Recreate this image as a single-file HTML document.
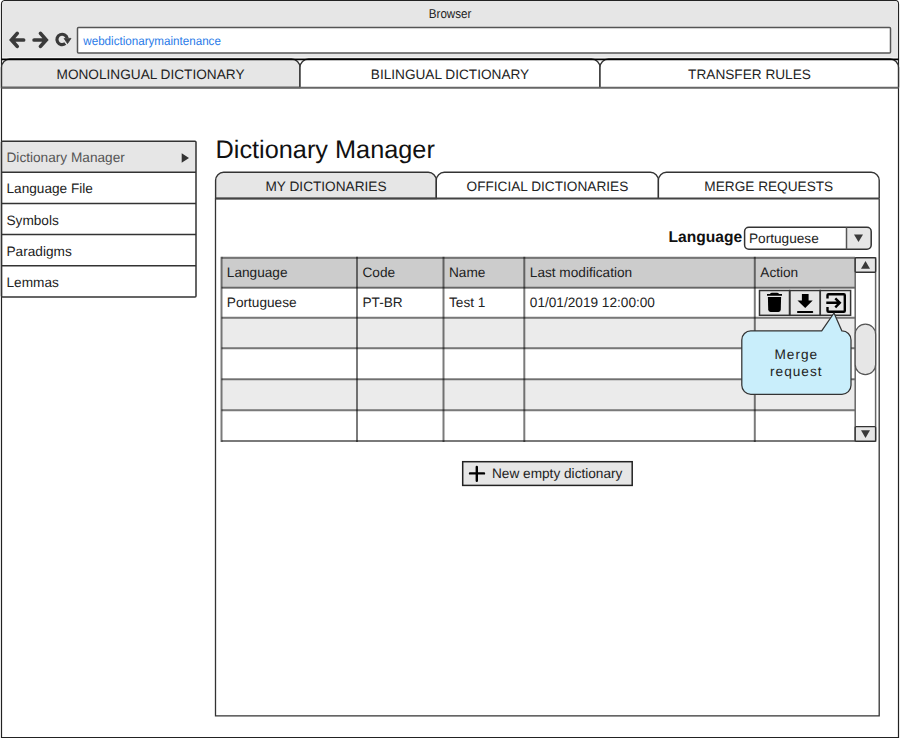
<!DOCTYPE html>
<html><head><meta charset="utf-8">
<style>
html,body{margin:0;padding:0;background:#fff;width:900px;height:738px;overflow:hidden}
svg{display:block}
text{font-family:"Liberation Sans",sans-serif;font-size:13.65px;fill:#222;text-rendering:geometricPrecision}
</style></head>
<body>
<svg width="900" height="738" viewBox="0 0 900 738">
  <!-- browser frame -->
  <path d="M1.5,738 V4 A3.5,3.5 0 0 1 5,0.5 H895 A3.5,3.5 0 0 1 898.5,4 V738" fill="#fff" stroke="#222" stroke-width="1.2"/>
  <path d="M2.1,57.6 V4 A2.9,2.9 0 0 1 5,1.1 H895 A2.9,2.9 0 0 1 897.9,4 V57.6 Z" fill="#e6e6e6"/>
  <line x1="1.5" y1="737.5" x2="898.5" y2="737.5" stroke="#222" stroke-width="1.2"/>
  <text x="428.8" y="17.6" textLength="42.6" lengthAdjust="spacingAndGlyphs" style="font-size:12.9px">Browser</text>
  <!-- nav icons -->
  <g fill="none" stroke="#3a3a3a" stroke-width="3.7" stroke-linecap="round" stroke-linejoin="miter">
    <path d="M23.6,40 H12.5 M17.2,33.4 L11.5,39.9 L17.2,46.4"/>
    <path d="M34.1,40 H45.2 M40.5,33.4 L46.2,39.9 L40.5,46.4"/>
  </g>
  <path d="M65.3,43.6 A5.2,5.2 0 1 1 67.2,38.3" fill="none" stroke="#3a3a3a" stroke-width="3.2"/>
  <path d="M64.1,38.4 L71,38.4 L67.5,43.6 Z" fill="#3a3a3a" stroke="#3a3a3a" stroke-width="0.8" stroke-linejoin="round"/>
  <!-- url box -->
  <rect x="77.5" y="27.5" width="813" height="25.5" rx="1" fill="#fff" stroke="#555" stroke-width="1.5"/>
  <text x="83.3" y="44.6" textLength="137.6" lengthAdjust="spacingAndGlyphs" style="font-size:12.3px;fill:#2a7be8">webdictionarymaintenance</text>
  <!-- top tabs -->
  <path d="M1.5,87.5 V67.5 A8.5,8.5 0 0 1 10.0,59 H291.5 A8.5,8.5 0 0 1 300,67.5 V87.5 Z" fill="#e6e6e6" stroke="#333" stroke-width="1.4"/>
  <path d="M300,87.5 V67.5 A8.5,8.5 0 0 1 308.5,59 H591.5 A8.5,8.5 0 0 1 600,67.5 V87.5" fill="#fff" stroke="#333" stroke-width="1.4"/>
  <path d="M600,87.5 V67.5 A8.5,8.5 0 0 1 608.5,59 H890.0 A8.5,8.5 0 0 1 898.5,67.5 V87.5" fill="#fff" stroke="#333" stroke-width="1.4"/>
  <line x1="1.5" y1="59.3" x2="898.5" y2="59.3" stroke="#000" stroke-width="1.7"/>
  <line x1="1.5" y1="87.7" x2="898.5" y2="87.7" stroke="#666" stroke-width="2"/>
  <text x="150.5" y="78.9" text-anchor="middle">MONOLINGUAL DICTIONARY</text>
  <text x="450" y="78.9" text-anchor="middle">BILINGUAL DICTIONARY</text>
  <text x="749.5" y="78.9" text-anchor="middle">TRANSFER RULES</text>

  <!-- sidebar -->
  <rect x="1.5" y="141.3" width="194.5" height="31" fill="#e6e6e6"/>
  <rect x="1.5" y="141.3" width="194.5" height="155.7" rx="1" fill="none" stroke="#333" stroke-width="1.5"/>
  <g stroke="#333" stroke-width="1.5">
    <line x1="1.5" y1="172.3" x2="196" y2="172.3"/>
    <line x1="1.5" y1="203.4" x2="196" y2="203.4"/>
    <line x1="1.5" y1="234.5" x2="196" y2="234.5"/>
    <line x1="1.5" y1="265.7" x2="196" y2="265.7"/>
  </g>
  <text x="6.5" y="162" style="fill:#555">Dictionary Manager</text>
  <path d="M181.7,153.2 L189,158 L181.7,162.7 Z" fill="#333"/>
  <text x="6.5" y="193.4">Language File</text>
  <text x="6.5" y="224.5">Symbols</text>
  <text x="6.5" y="255.7">Paradigms</text>
  <text x="6.5" y="286.8">Lemmas</text>

  <!-- title -->
  <text x="215.5" y="157.6" style="font-size:25.3px;fill:#111">Dictionary Manager</text>

  <!-- inner panel -->
  <path d="M215.5,198.5 V715.8 H879.2 V198.5" fill="#fff" stroke="#333" stroke-width="1.3"/>
  <path d="M215.6,198.5 V180.3 A8,8 0 0 1 223.6,172.3 H428.3 A8,8 0 0 1 436.3,180.3 V198.5 Z" fill="#e6e6e6" stroke="#333" stroke-width="1.4"/>
  <path d="M436.3,198.5 V180.3 A8,8 0 0 1 444.3,172.3 H650.4 A8,8 0 0 1 658.4,180.3 V198.5" fill="#fff" stroke="#333" stroke-width="1.4"/>
  <path d="M658.4,198.5 V180.3 A8,8 0 0 1 666.4,172.3 H871.2 A8,8 0 0 1 879.2,180.3 V198.5" fill="#fff" stroke="#333" stroke-width="1.4"/>
  <line x1="215.6" y1="198.5" x2="879.2" y2="198.5" stroke="#444" stroke-width="2"/>
  <text x="326" y="191.3" text-anchor="middle">MY DICTIONARIES</text>
  <text x="547.4" y="191.3" text-anchor="middle">OFFICIAL DICTIONARIES</text>
  <text x="768.8" y="191.3" text-anchor="middle">MERGE REQUESTS</text>

  <!-- language dropdown -->
  <text x="668.5" y="241.7" style="font-size:15.6px;font-weight:bold;fill:#111">Language</text>
  <path d="M846.5,227.3 H867 Q871.2,227.3 871.2,231.5 V245 Q871.2,249.3 867,249.3 H846.5 Z" fill="#e6e6e6"/>
  <rect x="744.6" y="227.3" width="126.6" height="22" rx="4.2" fill="none" stroke="#333" stroke-width="1.5"/>
  <line x1="846.5" y1="227.3" x2="846.5" y2="249.3" stroke="#555" stroke-width="1.5"/>
  <path d="M854,234.5 L863,234.5 L858.5,242 Z" fill="#3a3a3a"/>
  <text x="749" y="243.3">Portuguese</text>

  <!-- table -->
  <rect x="221.5" y="257.8" width="633.5" height="30" fill="#cccccc"/>
  <rect x="221.5" y="317.8" width="633.5" height="30.5" fill="#ebebeb"/>
  <rect x="221.5" y="379" width="633.5" height="31" fill="#ebebeb"/>
  <g stroke="#000" stroke-opacity="0.52" stroke-width="2">
    <line x1="221.5" y1="257.8" x2="855" y2="257.8"/>
    <line x1="221.5" y1="287.8" x2="855" y2="287.8"/>
    <line x1="221.5" y1="317.8" x2="855" y2="317.8"/>
    <line x1="221.5" y1="348.2" x2="855" y2="348.2"/>
    <line x1="221.5" y1="379.2" x2="855" y2="379.2"/>
    <line x1="221.5" y1="410.2" x2="855" y2="410.2"/>
    <line x1="221.5" y1="441" x2="855" y2="441"/>
    <line x1="221.5" y1="256.8" x2="221.5" y2="442"/>
    <line x1="357" y1="256.8" x2="357" y2="442"/>
    <line x1="443.5" y1="256.8" x2="443.5" y2="442"/>
    <line x1="524.3" y1="256.8" x2="524.3" y2="442"/>
    <line x1="754.8" y1="256.8" x2="754.8" y2="442"/>
  </g>
  <text x="226.8" y="276.8">Language</text>
  <text x="362.5" y="276.8">Code</text>
  <text x="449" y="276.8">Name</text>
  <text x="529.8" y="276.8">Last modification</text>
  <text x="760.3" y="276.8">Action</text>
  <text x="226.8" y="306.8">Portuguese</text>
  <text x="362.5" y="306.8">PT-BR</text>
  <text x="449" y="306.8">Test 1</text>
  <text x="529.8" y="306.8">01/01/2019 12:00:00</text>

  <!-- scrollbar -->
  <rect x="855.2" y="257.8" width="20.4" height="183.4" fill="#fff" stroke="#666" stroke-width="1.5"/>
  <rect x="855.2" y="257.8" width="20.4" height="14.4" rx="1" fill="#e6e6e6" stroke="#333" stroke-width="1.4"/>
  <rect x="855.2" y="426.6" width="20.4" height="14.6" rx="1" fill="#e6e6e6" stroke="#333" stroke-width="1.4"/>
  <path d="M861,268.7 L870,268.7 L865.5,261 Z" fill="#3a3a3a"/>
  <path d="M861,430.3 L870,430.3 L865.5,437.9 Z" fill="#3a3a3a"/>
  <rect x="855.2" y="324.2" width="20.4" height="50.4" rx="10.2" fill="#e6e6e6" stroke="#555" stroke-width="1.2"/>

  <!-- action buttons -->
  <g fill="#e6e6e6" stroke="#333" stroke-width="1.5">
    <rect x="759.5" y="290.5" width="30" height="24.8"/>
    <rect x="790" y="290.5" width="30.2" height="24.8"/>
    <rect x="820.3" y="290.5" width="30.3" height="24.8"/>
  </g>
  <!-- trash -->
  <path d="M767,295.7 H782 V294 H779 Q778.5,292.8 777,292.8 H772 Q770.5,292.8 770,294 H767 Z" fill="#000"/>
  <path d="M767.9,297 H781.1 L780.8,309.6 Q780.7,312 778.5,312 H770.5 Q768.3,312 768.2,309.6 Z" fill="#000"/>
  <!-- download -->
  <path d="M801.9,294.1 H808.6 V300.6 H812.7 L805.2,308.1 L797.5,300.6 H801.9 Z" fill="#000"/>
  <rect x="797" y="311.1" width="16.2" height="2" rx="0.8" fill="#000"/>
  <!-- merge icon -->
  <path d="M827.5,298.5 V295 Q827.5,294.3 828.5,294.3 H843.8 Q844.8,294.3 844.8,295.3 V310.8 Q844.8,311.8 843.8,311.8 H828.5 Q827.5,311.8 827.5,310.8 V307" fill="none" stroke="#000" stroke-width="2.4"/>
  <path d="M826.3,302.8 H839.5 M835.3,298.3 L839.8,302.8 L835.3,307.3" fill="none" stroke="#000" stroke-width="2.4"/>

  <!-- tooltip -->
  <path d="M750.8,330.9 H821.7 L834,313 L841.9,330.9 H842 A9,9 0 0 1 851,339.9 V385.3 A9,9 0 0 1 842,394.3 H750.8 A9,9 0 0 1 741.8,385.3 V339.9 A9,9 0 0 1 750.8,330.9 Z" fill="#c9eefb" stroke="#333" stroke-width="1.25" stroke-linejoin="round"/>
  <text x="796.3" y="358.8" text-anchor="middle" style="letter-spacing:1.0px">Merge</text>
  <text x="796.3" y="375.7" text-anchor="middle" style="letter-spacing:1.0px">request</text>

  <!-- new empty dictionary button -->
  <rect x="462.7" y="461.7" width="169.5" height="23.7" fill="#e6e6e6" stroke="#222" stroke-width="1.5"/>
  <path d="M470,473.4 H484 M476.8,467 V480.7" stroke="#000" stroke-width="2.4" stroke-linecap="round"/>
  <text x="492" y="478">New empty dictionary</text>
</svg>
</body></html>
